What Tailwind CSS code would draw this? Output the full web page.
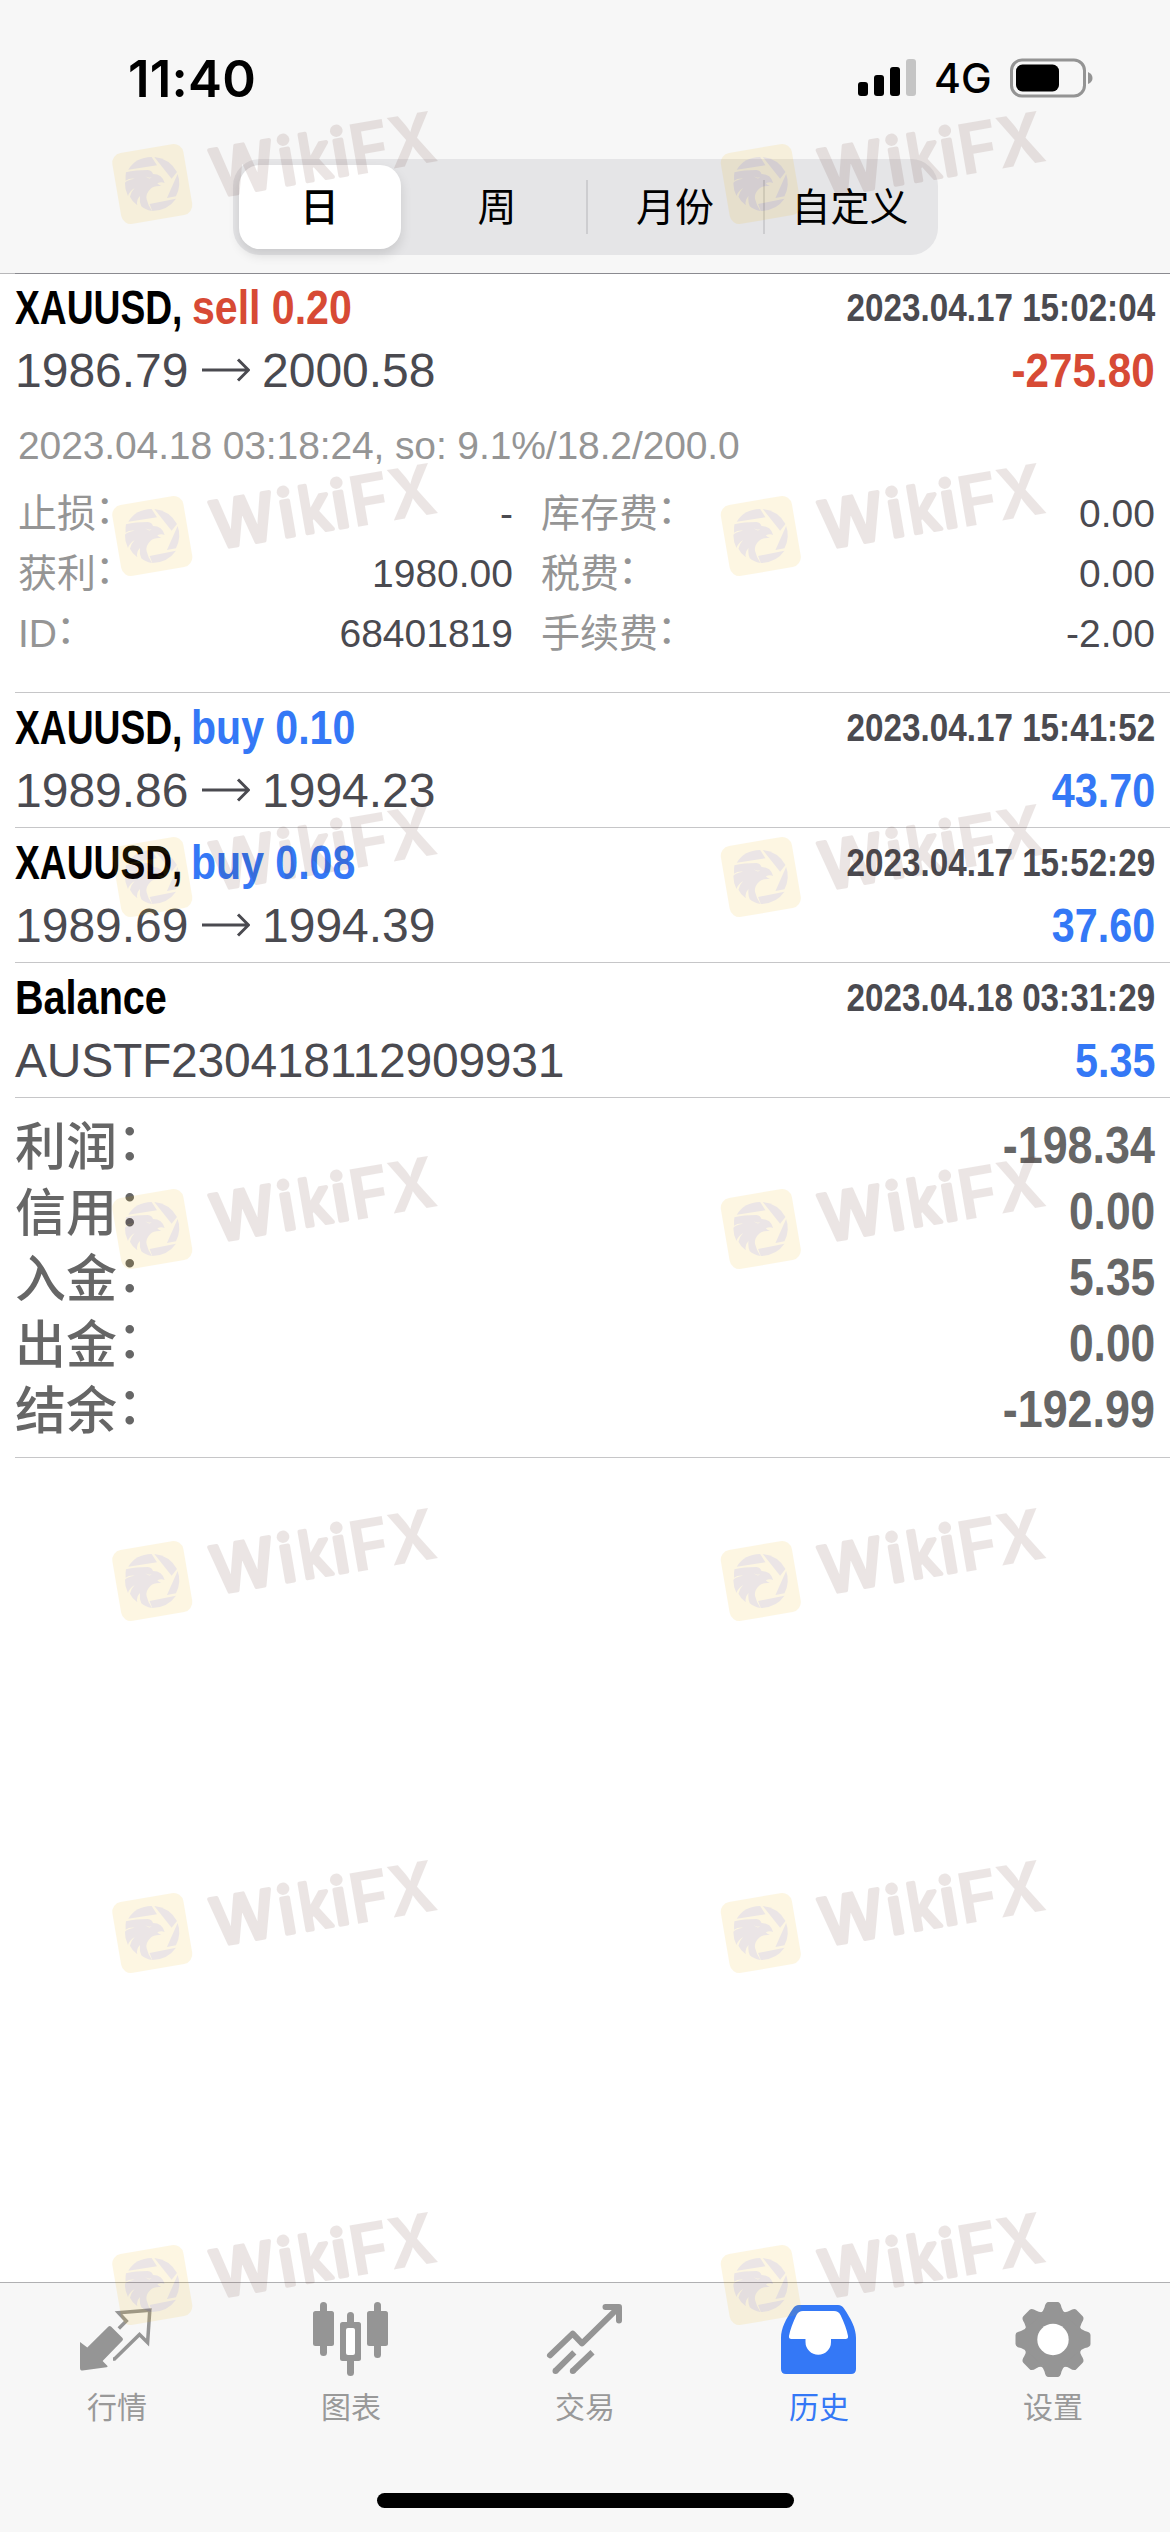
<!DOCTYPE html>
<html lang="zh-CN">
<head>
  <meta charset="UTF-8" />
  <title>历史</title>
  <meta name="viewport" content="width=device-width, initial-scale=1.0" />
  <script src="https://cdn.jsdelivr.net/npm/@tailwindcss/browser@4"></script>
</head>
<body class="relative flex flex-col w-[1170px] h-[2532px] overflow-hidden bg-white text-[#4a4a50] font-['Liberation_Sans','Noto_Sans_CJK_SC',sans-serif]">

  <!-- Header -->
  <header class="h-[273px] shrink-0 bg-[#f7f7f7] text-black">
    <div class="h-[156px] flex items-center justify-between pl-[128px] pr-[77px]">
      <span class="font-['Inter',sans-serif] font-semibold text-[51px] leading-none tracking-[0.2px]">11:40</span>
      <div class="flex items-center">
        <svg class="w-[58px] h-[38px]" viewBox="0 0 58 38">
          <rect x="0" y="23" width="10" height="14" rx="3" />
          <rect x="16" y="16" width="10" height="21" rx="3" />
          <rect x="32" y="8" width="10" height="29" rx="3" />
          <rect x="48" y="0" width="10" height="37" rx="3" fill="#c5c5c5" />
        </svg>
        <span class="ml-[18px] w-[59px] font-['Inter',sans-serif] font-medium text-[41px] leading-none">4G</span>
        <svg class="ml-[17px] w-[83px] h-[40px]" viewBox="0 0 83 40">
          <rect x="1.5" y="2" width="73" height="36" rx="10.5" fill="none" stroke="#949494" stroke-width="3" />
          <rect x="6" y="6.500" width="43" height="27" rx="6.500" />
          <path d="M78 14 Q82.500 16 82.500 20 Q82.500 24 78 26 Z" fill="#949494" />
        </svg>
      </div>
    </div>
    <div class="mx-auto mt-[3px] w-[705px] h-[96px] rounded-[27px] bg-[#e5e5e7] p-1.5 flex items-center text-[39px]">
      <div class="w-[162px] h-[84px] rounded-[21px] bg-white shadow-[0_6px_12px_rgba(0,0,0,0.12)] flex items-center justify-center font-medium pt-[3px]">日</div>
      <div class="ml-2 w-[177px] text-center pt-[3px]">周</div>
      <div class="w-[2px] h-[54px] bg-[#cdcdd0]"></div>
      <div class="w-[175px] text-center pt-[3px]">月份</div>
      <div class="w-[2px] h-[54px] bg-[#cdcdd0]"></div>
      <div class="flex-1 text-center pt-[3px] pl-[4px]">自定义</div>
    </div>
  </header>

  <!-- History -->
  <main class="flex-1 text-[48px]">
    <div class="flex h-px">
      <div class="w-[15px] bg-[#b8b8ba]"></div>
      <div class="flex-1 bg-[#8b8b90]"></div>
    </div>

    <section class="ml-[15px] pr-[15px] pt-[2px] h-[419px] border-b border-[#c6c6c8]">
      <div class="flex justify-between leading-[63px] h-[63px] font-bold whitespace-nowrap">
        <div class="flex">
          <span class="w-[177px] text-black origin-left scale-x-[0.775]">XAUUSD,</span>
          <span class="text-[#d74a35] origin-left scale-x-[0.855]">sell 0.20</span>
        </div>
        <span class="text-[39px] origin-right scale-x-[0.852]">2023.04.17 15:02:04</span>
      </div>
      <div class="flex justify-between leading-[63px] h-[63px] whitespace-nowrap">
        <div class="flex items-center">
          <span class="w-[187px]">1986.79</span>
          <svg class="w-[48px] h-[24px] -mt-0.5" viewBox="0 0 48 24" fill="none" stroke="#4a4a50" stroke-width="3"><path d="M0 12 H46 M36 1.500 L46.500 12 L36 22.500" /></svg>
          <span class="ml-[12px]">2000.58</span>
        </div>
        <span class="font-bold text-[#d74a35] origin-right scale-x-[0.88]">-275.80</span>
      </div>
      <div class="mt-[14px] ml-[3px] text-[39px] tracking-[-0.12px] leading-[60px] h-[60px] text-[#959595]">2023.04.18 03:18:24, so: 9.1%/18.2/200.0</div>
      <div class="mt-2 ml-[3px] flex text-[39px] leading-[60px]">
        <div class="w-[495px]">
          <div class="flex justify-between h-[60px]"><span class="text-[#959595]">止损<span class="inline-block -translate-x-[1px] -translate-y-[4px]">：</span></span><span>-</span></div>
          <div class="flex justify-between h-[60px]"><span class="text-[#959595]">获利<span class="inline-block -translate-x-[1px] -translate-y-[4px]">：</span></span><span>1980.00</span></div>
          <div class="flex justify-between h-[60px]"><span class="text-[#959595]">ID<span class="inline-block -translate-x-[1px] -translate-y-[4px]">：</span></span><span>68401819</span></div>
        </div>
        <div class="ml-[28px] flex-1">
          <div class="flex justify-between h-[60px]"><span class="text-[#959595]">库存费<span class="inline-block -translate-x-[1px] -translate-y-[4px]">：</span></span><span>0.00</span></div>
          <div class="flex justify-between h-[60px]"><span class="text-[#959595]">税费<span class="inline-block -translate-x-[1px] -translate-y-[4px]">：</span></span><span>0.00</span></div>
          <div class="flex justify-between h-[60px]"><span class="text-[#959595]">手续费<span class="inline-block -translate-x-[1px] -translate-y-[4px]">：</span></span><span>-2.00</span></div>
        </div>
      </div>
    </section>

    <section class="ml-[15px] pr-[15px] pt-[3px] h-[135px] border-b border-[#c6c6c8]">
      <div class="flex justify-between leading-[63px] h-[63px] font-bold whitespace-nowrap">
        <div class="flex">
          <span class="w-[176px] text-black origin-left scale-x-[0.775]">XAUUSD,</span>
          <span class="text-[#3478f6] origin-left scale-x-[0.855]">buy 0.10</span>
        </div>
        <span class="text-[39px] origin-right scale-x-[0.852]">2023.04.17 15:41:52</span>
      </div>
      <div class="flex justify-between leading-[63px] h-[63px] whitespace-nowrap">
        <div class="flex items-center">
          <span class="w-[187px]">1989.86</span>
          <svg class="w-[48px] h-[24px] -mt-0.5" viewBox="0 0 48 24" fill="none" stroke="#4a4a50" stroke-width="3"><path d="M0 12 H46 M36 1.500 L46.500 12 L36 22.500" /></svg>
          <span class="ml-[12px]">1994.23</span>
        </div>
        <span class="font-bold text-[#3478f6] origin-right scale-x-[0.86]">43.70</span>
      </div>
    </section>

    <section class="ml-[15px] pr-[15px] pt-[3px] h-[135px] border-b border-[#c6c6c8]">
      <div class="flex justify-between leading-[63px] h-[63px] font-bold whitespace-nowrap">
        <div class="flex">
          <span class="w-[176px] text-black origin-left scale-x-[0.775]">XAUUSD,</span>
          <span class="text-[#3478f6] origin-left scale-x-[0.855]">buy 0.08</span>
        </div>
        <span class="text-[39px] origin-right scale-x-[0.852]">2023.04.17 15:52:29</span>
      </div>
      <div class="flex justify-between leading-[63px] h-[63px] whitespace-nowrap">
        <div class="flex items-center">
          <span class="w-[187px]">1989.69</span>
          <svg class="w-[48px] h-[24px] -mt-0.5" viewBox="0 0 48 24" fill="none" stroke="#4a4a50" stroke-width="3"><path d="M0 12 H46 M36 1.500 L46.500 12 L36 22.500" /></svg>
          <span class="ml-[12px]">1994.39</span>
        </div>
        <span class="font-bold text-[#3478f6] origin-right scale-x-[0.86]">37.60</span>
      </div>
    </section>

    <section class="ml-[15px] pr-[15px] pt-[3px] h-[135px] border-b border-[#c6c6c8]">
      <div class="flex justify-between leading-[63px] h-[63px] font-bold whitespace-nowrap">
        <span class="text-black origin-left scale-x-[0.825]">Balance</span>
        <span class="text-[39px] origin-right scale-x-[0.852]">2023.04.18 03:31:29</span>
      </div>
      <div class="flex justify-between leading-[63px] h-[63px] whitespace-nowrap">
        <span class="tracking-[-0.25px]">AUSTF230418112909931</span>
        <span class="font-bold text-[#3478f6] origin-right scale-x-[0.86]">5.35</span>
      </div>
    </section>

    <section class="ml-[15px] pr-[15px] pt-[15px] h-[360px] border-b border-[#c6c6c8] text-[51px] leading-[66px] font-bold text-[#666]">
      <div class="flex justify-between h-[66px]"><span class="font-medium pt-[2px]">利润<span class="inline-block -translate-y-[5px]">：</span></span><span class="origin-right scale-x-[0.88]">-198.34</span></div>
      <div class="flex justify-between h-[66px]"><span class="font-medium pt-[2px]">信用<span class="inline-block -translate-y-[5px]">：</span></span><span class="origin-right scale-x-[0.87]">0.00</span></div>
      <div class="flex justify-between h-[66px]"><span class="font-medium pt-[2px]">入金<span class="inline-block -translate-y-[5px]">：</span></span><span class="origin-right scale-x-[0.87]">5.35</span></div>
      <div class="flex justify-between h-[66px]"><span class="font-medium pt-[2px]">出金<span class="inline-block -translate-y-[5px]">：</span></span><span class="origin-right scale-x-[0.87]">0.00</span></div>
      <div class="flex justify-between h-[66px]"><span class="font-medium pt-[2px]">结余<span class="inline-block -translate-y-[5px]">：</span></span><span class="origin-right scale-x-[0.88]">-192.99</span></div>
    </section>
  </main>

  <!-- Tab bar -->
  <footer class="h-[250px] shrink-0 bg-[#f7f7f7] border-t border-[#b0b0b2] text-[30px] text-[#999]">
    <nav class="grid grid-cols-5 h-[210px] text-center leading-[40px]">
      <a href="#" class="flex flex-col items-center pt-[17px]">
        <svg class="w-[90px] h-[86px]" viewBox="72 2300 90 86" fill="#959595">
          <path d="M80 2342 L87.300 2347.500 L108.500 2326.500 Q109.700 2325.500 111 2326.500 L122.500 2338 Q123.500 2339 122.500 2340.500 L102.600 2361 L107.500 2366 Q108 2367 106.500 2367.300 L82.500 2370.600 Q80 2370.600 80 2368 Z" />
          <path d="M118.800 2328.500 L126.300 2321 L118.500 2312.800 L149.800 2310.200 L147.600 2342.500 L139.500 2334.500 L114.500 2359 H113" fill="none" stroke="#959595" stroke-width="3.500" />
        </svg>
        <span class="mt-[2px]">行情</span>
      </a>
      <a href="#" class="flex flex-col items-center pt-[17px]">
        <svg class="w-[90px] h-[86px]" viewBox="306 2300 90 86" fill="#959595">
          <rect x="320" y="2302" width="7" height="54" rx="3.500" />
          <rect x="313" y="2311" width="21" height="35" rx="2.500" />
          <rect x="347" y="2312" width="7" height="64" rx="3.500" />
          <rect x="340" y="2322" width="21" height="39" rx="2.500" />
          <rect x="346" y="2328" width="9" height="27" rx="2" fill="#fff" />
          <rect x="374" y="2302" width="7" height="56" rx="3.500" />
          <rect x="367" y="2311" width="21" height="35" rx="2.500" />
        </svg>
        <span class="mt-[2px]">图表</span>
      </a>
      <a href="#" class="flex flex-col items-center pt-[17px]">
        <svg class="w-[90px] h-[86px]" viewBox="540 2300 90 86" fill="none" stroke="#959595" stroke-width="6">
          <path d="M550 2355.300 L572.700 2333.700 L582 2343.300 L618.700 2307.300 M605.500 2307 H619 V2320.500" stroke-linecap="round" stroke-linejoin="round" />
          <path d="M555.500 2371 L574.300 2352.300 M572.800 2371 L592.500 2352.300" />
          <path d="M555.500 2371 h.01 M572.800 2371 h.01" stroke-linecap="round" />
        </svg>
        <span class="mt-[2px]">交易</span>
      </a>
      <a href="#" class="flex flex-col items-center pt-[17px] text-[#3478f6]">
        <svg class="w-[90px] h-[86px]" viewBox="774 2300 90 86">
          <path d="M799 2305 H838 Q842 2305 844 2308.500 C851 2319 856 2328 856 2338 V2369 Q856 2374 851 2374 H786 Q781 2374 781 2369 V2338 C781 2328 786 2319 793 2308.500 Q795 2305 799 2305 Z" fill="#3478f6" />
          <path d="M803 2311 H834 Q838.500 2311 840.500 2315 C844 2322 847 2330 848 2336 Q848.500 2339 845.500 2339 H831 V2342 A12.700 12.700 0 0 1 805.500 2342 V2339 H791.500 Q788.500 2339 789 2336 C790 2330 793 2322 796.500 2315 Q798.500 2311 803 2311 Z" fill="#fff" />
        </svg>
        <span class="mt-[2px]">历史</span>
      </a>
      <a href="#" class="flex flex-col items-center pt-[17px]">
        <svg class="w-[90px] h-[86px]" viewBox="-45 -39.500 90 86">
          <defs>
            <path id="tooth" d="M-13 -26 Q-9.500 -28 -8.500 -32 Q-7.500 -37.500 -4.500 -37.500 H4.500 Q7.500 -37.500 8.500 -32 Q9.500 -28 13 -26 Z" />
          </defs>
          <g fill="#959595">
            <circle r="28.500" />
            <use href="#tooth" />
            <use href="#tooth" transform="rotate(45)" />
            <use href="#tooth" transform="rotate(90)" />
            <use href="#tooth" transform="rotate(135)" />
            <use href="#tooth" transform="rotate(180)" />
            <use href="#tooth" transform="rotate(225)" />
            <use href="#tooth" transform="rotate(270)" />
            <use href="#tooth" transform="rotate(315)" />
          </g>
          <circle r="15.700" fill="#fff" />
        </svg>
        <span class="mt-[2px]">设置</span>
      </a>
    </nav>
    <div class="mx-auto w-[417px] h-[15px] rounded-full bg-black"></div>
  </footer>

  <!-- Watermarks -->
  <svg class="absolute inset-0 w-[1170px] h-[2532px] pointer-events-none" viewBox="0 0 1170 2532">
    <defs>
      <g id="wm" opacity="0.11">
        <g transform="rotate(-9.700)">
          <rect x="-36" y="-36" width="72" height="72" rx="10" fill="#f0b400" />
          <g fill="#501e14" font-family="Inter, sans-serif" font-weight="700" font-size="70">
            <g stroke="#501e14" stroke-width="4" stroke-linejoin="round" font-size="65" font-weight="500">
              <text x="60" y="23.500" textLength="64" lengthAdjust="spacingAndGlyphs">W</text>
              <text x="128" y="23.500">i</text>
              <text x="149" y="23.500" textLength="31" lengthAdjust="spacingAndGlyphs">k</text>
              <text x="182" y="23.500">i</text>
            </g>
            <text x="200" y="25.500" textLength="40" lengthAdjust="spacingAndGlyphs">F</text>
            <text x="239" y="25.500" textLength="48" lengthAdjust="spacingAndGlyphs">X</text>
          </g>
        </g>
        <g transform="scale(.3333) translate(-135 -136)" fill="#501e28">
          <path d="M63 93 Q85 56 133 55 L149 80 Z" />
          <path d="M141 55 Q187 60 209 100 L193 120 Z" />
          <path d="M211 106 Q223 138 206 173 L179 178 Z" />
          <path d="M127 196 L206 180 Q182 215 135 217 Z" />
          <path d="M56 101 Q85 94 122 94 Q134 96 137 106 Q165 106 172 133 Q162 128 150 134 Q154 139 162 142 Q140 140 130 150 Q114 165 118 182 Q122 200 134 217 Q112 213 102 203 Q96 190 98 172 Q86 184 90 200 Q74 188 68 174 Q72 158 82 148 Q66 158 62 172 Q52 152 53 132 Q58 124 82 120 Q66 118 55 126 Q54 112 56 101 Z" />
          <path d="M114 113 Q124 120 133 116 Q126 124 114 113 Z" fill="#f0b400" />
        </g>
      </g>
      <g id="wmrow">
        <use href="#wm" x="152.300" />
        <use href="#wm" x="760.800" />
      </g>
    </defs>
    <use href="#wmrow" y="184" />
    <use href="#wmrow" y="536" />
    <use href="#wmrow" y="877" />
    <use href="#wmrow" y="1229" />
    <use href="#wmrow" y="1581" />
    <use href="#wmrow" y="1933" />
    <use href="#wmrow" y="2285" />
  </svg>
</body>
</html>
